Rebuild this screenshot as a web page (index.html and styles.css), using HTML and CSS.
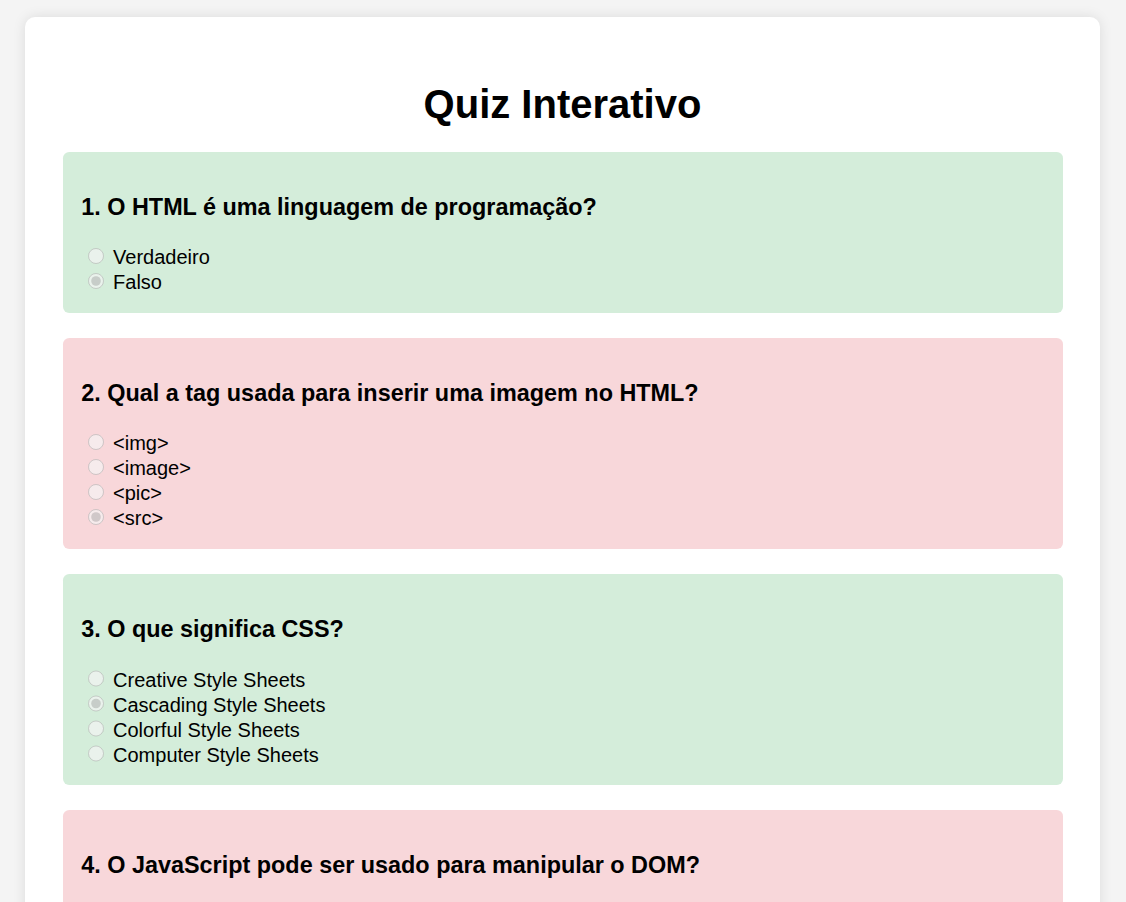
FILE: index.html
```html
<!DOCTYPE html>
<html lang="pt-BR">
<head>
<meta charset="utf-8">
<title>Quiz Interativo</title>
<link rel="stylesheet" href="styles.css">
</head>
<body>
<div class="container">
  <h1 class="title">Quiz Interativo</h1>
  <div class="question correct">
    <h3 class="q-text">1. O HTML é uma linguagem de programação?</h3>
    <label class="option"><input class="radio" type="radio" name="q1" disabled> Verdadeiro</label>
    <label class="option"><input class="radio" type="radio" name="q1" checked disabled> Falso</label>
  </div>
  <div class="question wrong">
    <h3 class="q-text">2. Qual a tag usada para inserir uma imagem no HTML?</h3>
    <label class="option"><input class="radio" type="radio" name="q2" disabled> &lt;img&gt;</label>
    <label class="option"><input class="radio" type="radio" name="q2" disabled> &lt;image&gt;</label>
    <label class="option"><input class="radio" type="radio" name="q2" disabled> &lt;pic&gt;</label>
    <label class="option"><input class="radio" type="radio" name="q2" checked disabled> &lt;src&gt;</label>
  </div>
  <div class="question correct">
    <h3 class="q-text">3. O que significa CSS?</h3>
    <label class="option"><input class="radio" type="radio" name="q3" disabled> Creative Style Sheets</label>
    <label class="option"><input class="radio" type="radio" name="q3" checked disabled> Cascading Style Sheets</label>
    <label class="option"><input class="radio" type="radio" name="q3" disabled> Colorful Style Sheets</label>
    <label class="option"><input class="radio" type="radio" name="q3" disabled> Computer Style Sheets</label>
  </div>
  <div class="question wrong">
    <h3 class="q-text">4. O JavaScript pode ser usado para manipular o DOM?</h3>
    <label class="option"><input class="radio" type="radio" name="q4" disabled> Verdadeiro</label>
    <label class="option"><input class="radio" type="radio" name="q4" checked disabled> Falso</label>
  </div>
</div>
</body>
</html>
```
FILE: styles.css
```css
html, body {
  margin: 0;
}
body {
  background: #f4f4f4;
  font-family: "Liberation Sans", Arial, sans-serif;
  font-size: 20px;
  color: #000;
  padding: 17px 26px 20px 25px;
}
.container {
  background: #fff;
  border-radius: 10px;
  box-shadow: 0 0 12.5px rgba(0, 0, 0, 0.1);
  padding: 37.5px;
}
.title {
  font-size: 40px;
  font-weight: bold;
  text-align: center;
  margin: 26px 0 25px;
  line-height: 46px;
}
.question {
  border-radius: 6.25px;
  padding: 18.75px;
  margin-bottom: 25px;
}
.question.correct {
  background: #d4edda;
}
.question.wrong {
  background: #f8d7da;
}
.q-text {
  font-size: 23.4px;
  font-weight: bold;
  margin: 23.4px 0;
}
.option {
  display: block;
}
.radio {
  width: 16.25px;
  height: 16.25px;
  margin: 3.75px 3.75px 0 6.25px;
}
```
